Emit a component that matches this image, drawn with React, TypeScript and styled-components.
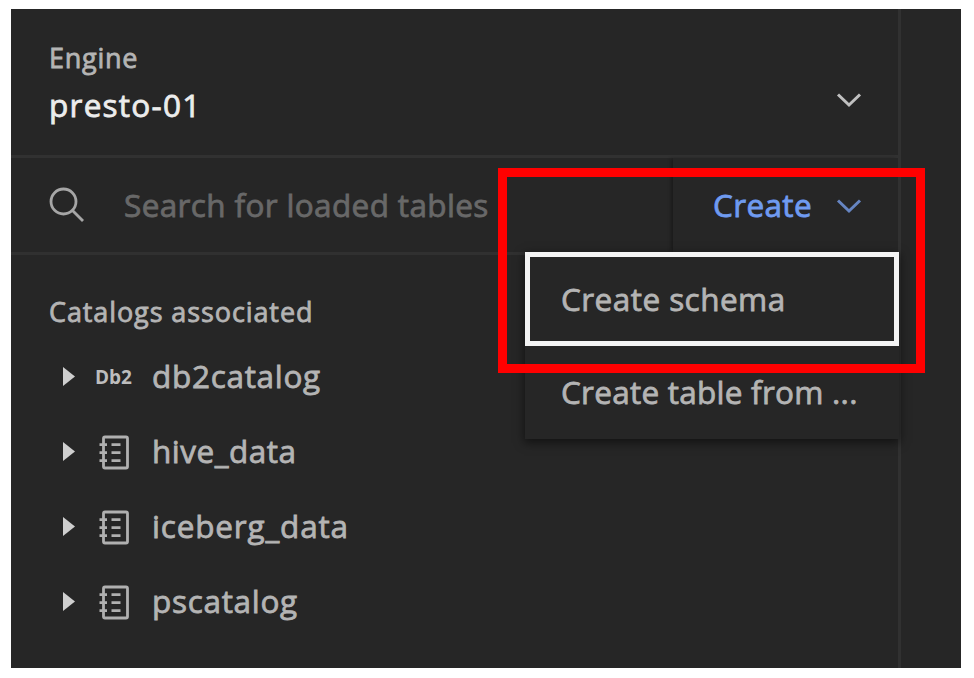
import React from 'react';
import styled, { createGlobalStyle } from 'styled-components';

const GlobalStyle = createGlobalStyle`
  * { box-sizing: border-box; }
  body { margin: 0; background: #fff; }
`;

const Page = styled.div`
  width: 974px;
  height: 678px;
  padding: 9px 0 0 11px;
  background: #fff;
  overflow: hidden;
`;

const Shell = styled.div`
  position: relative;
  display: flex;
  width: 950px;
  height: 659px;
  background: #262626;
  font-family: 'Open Sans', 'Noto Sans', sans-serif;
  color: #b9b9b9;
`;

const Sidebar = styled.aside`
  display: flex;
  flex-direction: column;
  width: 890px;
  border-right: 3px solid #313131;
`;

const Label = styled.span<{ $small?: boolean; $spacing?: number; $color?: string }>`
  font-size: ${(p) => (p.$small ? 27 : 31.5)}px;
  letter-spacing: ${(p) => p.$spacing ?? 0}px;
  color: ${(p) => p.$color ?? '#b4b4b4'};
  -webkit-text-stroke: 0.8px currentColor;
  white-space: pre;
`;

const EngineSelect = styled.header`
  display: flex;
  align-items: flex-start;
  justify-content: space-between;
  height: 149px;
  padding: 28px 36px 0 38px;
  border-bottom: 3px solid #313131;
`;

const EngineText = styled.div`
  display: flex;
  flex-direction: column;
  line-height: 42px;

  & > :last-child {
    line-height: 52px;
  }
`;

const EngineChevron = styled.div`
  display: flex;
  padding-top: 55px;
`;

const SearchRow = styled.div`
  display: flex;
  height: 97px;
  border-bottom: 3px solid #303030;
`;

const SearchField = styled.div`
  display: flex;
  flex: 1;
  align-items: center;
  padding: 0 0 2px 38px;
  gap: 39px;
`;

const CreateButton = styled.div`
  display: flex;
  align-items: center;
  justify-content: space-between;
  width: 225px;
  padding: 0 36px 2px 40px;
  box-shadow: -3px 0 3px -1px #1b1b1b;

  svg {
    margin-top: 3px;
  }
`;

const Catalogs = styled.section`
  display: flex;
  flex-direction: column;
  padding: 29px 0 0 38px;
`;

const CatalogHeading = styled.div`
  height: 54px;
  line-height: 55px;
`;

const CatalogRow = styled.div`
  display: flex;
  align-items: center;
  height: 75px;
`;

const CaretCell = styled.div`
  display: flex;
  width: 46px;
  padding: 1px 0 0 14px;
`;

const IconCell = styled.div`
  display: flex;
  align-items: center;
  width: 57px;
  padding-top: 3px;
`;

const Db2Mark = styled.span`
  font-size: 19px;
  font-weight: 700;
  line-height: 20px;
  color: #bdbdbd;
`;

const Menu = styled.div`
  position: absolute;
  left: 514px;
  top: 243px;
  width: 374px;
  background: #262626;
  box-shadow: 0 3px 9px 1px rgba(0, 0, 0, 0.5);
`;

const MenuItem = styled.div<{ $focused?: boolean }>`
  display: flex;
  align-items: center;
  height: ${(p) => (p.$focused ? 94 : 93)}px;
  padding: 0 0 2px ${(p) => (p.$focused ? 31 : 36)}px;
  border: ${(p) => (p.$focused ? '5px solid #f4f4f4' : '0')};
`;

const Highlight = styled.div`
  position: absolute;
  left: 487px;
  top: 159px;
  width: 427px;
  height: 205px;
  border: 9.5px solid #ff0000;
`;

const Chevron = ({ color }: { color: string }) => (
  <svg width="26" height="16" viewBox="0 0 26 16" fill="none">
    <path d="M2 2.5 L13 13 L24 2.5" stroke={color} strokeWidth="3" />
  </svg>
);

const SearchIcon = () => (
  <svg width="36" height="36" viewBox="0 0 36 36" fill="none" stroke="#a6a6a6" strokeWidth="2.8">
    <circle cx="14.5" cy="15.5" r="12.5" />
    <path d="M23.5 24.5 L34 35" />
  </svg>
);

const Caret = () => (
  <svg width="12" height="19" viewBox="0 0 12 19">
    <path d="M0 0 L12 9.5 L0 19 Z" fill="#cfcfcf" />
  </svg>
);

const CatalogIcon = () => (
  <svg width="38" height="36" viewBox="0 0 38 36" fill="none" stroke="#b0b0b0" strokeWidth="2.8">
    <rect x="8.5" y="3" width="24" height="31" rx="1.5" />
    <path d="M4.5 10.7 H12 M4.5 18.7 H12 M4.5 26.7 H12 M16.5 10.7 H25.5 M16.5 18.7 H25.5 M16.5 26.7 H25.5" />
  </svg>
);

const catalogs = [
  { name: 'db2catalog', spacing: 0.7, db2: true },
  { name: 'hive_data', spacing: 0.5 },
  { name: 'iceberg_data', spacing: 0.83 },
  { name: 'pscatalog', spacing: 0.7 },
];

export default function App() {
  return (
    <Page>
      <GlobalStyle />
      <Shell>
        <Sidebar>
          <EngineSelect>
            <EngineText>
              <Label $small $spacing={0.75}>Engine</Label>
              <Label $spacing={1.25} $color="#ececec">presto-01</Label>
            </EngineText>
            <EngineChevron>
              <Chevron color="#c0c0c0" />
            </EngineChevron>
          </EngineSelect>
          <SearchRow>
            <SearchField>
              <SearchIcon />
              <Label $spacing={0.36} $color="#686868">Search for loaded tables</Label>
            </SearchField>
            <CreateButton>
              <Label $spacing={0.35} $color="#6f9bf0">Create</Label>
              <Chevron color="#6685c2" />
            </CreateButton>
          </SearchRow>
          <Catalogs>
            <CatalogHeading>
              <Label $small $spacing={0.9}>Catalogs associated</Label>
            </CatalogHeading>
            {catalogs.map((c) => (
              <CatalogRow key={c.name}>
                <CaretCell>
                  <Caret />
                </CaretCell>
                <IconCell>{c.db2 ? <Db2Mark>Db2</Db2Mark> : <CatalogIcon />}</IconCell>
                <Label $spacing={c.spacing}>{c.name}</Label>
              </CatalogRow>
            ))}
          </Catalogs>
        </Sidebar>
        <Menu>
          <MenuItem $focused>
            <Label $spacing={0.45}>Create schema</Label>
          </MenuItem>
          <MenuItem>
            <Label $spacing={0.25}>Create table from ...</Label>
          </MenuItem>
        </Menu>
        <Highlight />
      </Shell>
    </Page>
  );
}
